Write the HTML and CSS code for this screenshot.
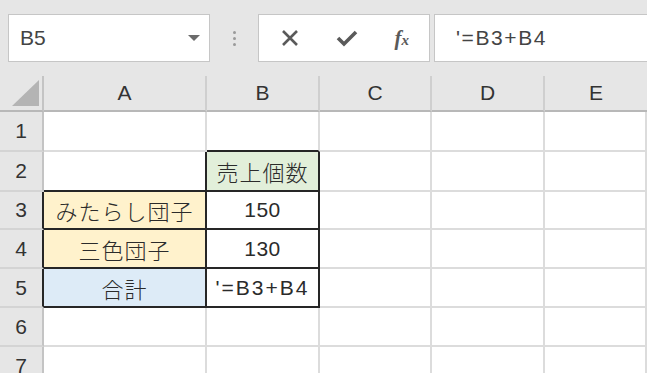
FILE: index.html
```html
<!DOCTYPE html>
<html lang="ja">

<head>
    <meta charset="UTF-8">
    <meta name="viewport" content="width=device-width, initial-scale=1.0">
    <title>Excel - 売上個数</title>
    <link rel="stylesheet" href="styles.css">
</head>

<body>
    <!-- Formula bar -->
    <div class="toolbar">
        <div class="name-box">
            <span>B5</span>
            <svg class="caret" width="12" height="7" viewBox="0 0 12 7"><path d="M0 0H12L6 6Z" fill="#6b6b6b"/></svg>
        </div>
        <div class="grip">
            <span></span><span></span><span></span>
        </div>
        <div class="fx-buttons">
            <svg width="18" height="18" viewBox="0 0 18 18"><path d="M2 2L16 16M16 2L2 16" stroke="#5a5a5a" stroke-width="2.6"/></svg>
            <svg width="22" height="18" viewBox="0 0 22 18"><path d="M2 9L8 15L20 3" stroke="#5a5a5a" stroke-width="3.6" fill="none"/></svg>
            <span class="fx">f<small>x</small></span>
        </div>
        <div class="formula">'=B3+B4</div>
    </div>

    <!-- Sheet -->
    <div class="sheet">
        <div class="corner">
            <svg width="27" height="26" viewBox="0 0 27 26"><path d="M27 0V26H0Z" fill="#b4b4b4"/></svg>
        </div>
        <div class="col-head">A</div>
        <div class="col-head">B</div>
        <div class="col-head">C</div>
        <div class="col-head">D</div>
        <div class="col-head last">E</div>

        <div class="row-head">1</div>
        <div class="cell"></div>
        <div class="cell bb"></div>
        <div class="cell"></div>
        <div class="cell"></div>
        <div class="cell"></div>

        <div class="row-head">2</div>
        <div class="cell br bb"></div>
        <div class="cell br bb green">売上個数</div>
        <div class="cell"></div>
        <div class="cell"></div>
        <div class="cell"></div>

        <div class="row-head dark">3</div>
        <div class="cell br bb orange">みたらし団子</div>
        <div class="cell br bb num">150</div>
        <div class="cell"></div>
        <div class="cell"></div>
        <div class="cell"></div>

        <div class="row-head dark">4</div>
        <div class="cell br bb orange">三色団子</div>
        <div class="cell br bb num">130</div>
        <div class="cell"></div>
        <div class="cell"></div>
        <div class="cell"></div>

        <div class="row-head dark">5</div>
        <div class="cell br bb blue">合計</div>
        <div class="cell br bb num wide">'=B3+B4</div>
        <div class="cell"></div>
        <div class="cell"></div>
        <div class="cell"></div>

        <div class="row-head">6</div>
        <div class="cell"></div>
        <div class="cell"></div>
        <div class="cell"></div>
        <div class="cell"></div>
        <div class="cell"></div>

        <div class="row-head">7</div>
        <div class="cell"></div>
        <div class="cell"></div>
        <div class="cell"></div>
        <div class="cell"></div>
        <div class="cell"></div>
    </div>
</body>

</html>
```

FILE: styles.css
```css
body {
    margin: 0;
    height: 373px;
    overflow: hidden;
    background-color: #e6e6e6;
    color: #333;
    font-family: 'Liberation Sans', 'Noto Sans CJK JP', sans-serif;
}

/* Formula bar */
.toolbar {
    display: flex;
    align-items: center;
    height: 76px;
    padding-left: 8px;
    box-sizing: border-box;
}

.name-box,
.fx-buttons,
.formula {
    height: 48px;
    box-sizing: border-box;
    background-color: #fff;
    border: 1px solid #c6c6c6;
    display: flex;
    align-items: center;
}

.name-box {
    width: 202px;
    padding: 0 9px 0 11px;
    justify-content: space-between;
    font-size: 21px;
    color: #444;
}

.grip {
    width: 48px;
    display: flex;
    flex-direction: column;
    align-items: center;
    gap: 3px;
}

.grip span {
    width: 3px;
    height: 3px;
    border-radius: 50%;
    background-color: #9a9a9a;
}

.fx-buttons {
    width: 172px;
    padding: 0 20px 0 22px;
    justify-content: space-between;
}

.fx {
    font-family: 'Liberation Serif', serif;
    font-style: italic;
    font-weight: bold;
    font-size: 21px;
    color: #5a5a5a;
}

.fx small {
    font-size: 15px;
}

.formula {
    flex: 1;
    margin-left: 4px;
    margin-right: -2px;
    padding-left: 21px;
    font-size: 21px;
    letter-spacing: 1.6px;
    color: #444;
}

/* Sheet grid */
.sheet {
    display: grid;
    grid-template-columns: 44px 163px 113px 112px 113px 1fr;
    grid-template-rows: 36px 40px 40px 38px 39px 39px 39px 39px;
    background-color: #fff;
}

.corner,
.col-head,
.row-head {
    background-color: #e6e6e6;
    display: flex;
    align-items: center;
    justify-content: center;
    box-sizing: border-box;
    font-size: 21px;
    color: #333;
}

.corner {
    border-right: 2px solid #c4c4c4;
    border-bottom: 2px solid #b8b8b8;
    justify-content: flex-start;
    padding-left: 12px;
}

.col-head {
    border-right: 2px solid #cfcfcf;
    border-bottom: 2px solid #b8b8b8;
}

.col-head.last {
    border-right: none;
}

.row-head {
    border-right: 2px solid #c4c4c4;
    border-bottom: 2px solid #d4d4d4;
}

.row-head.dark {
    border-right-color: #262626;
}

.cell {
    box-sizing: border-box;
    border-right: 2px solid #dcdcdc;
    border-bottom: 2px solid #dcdcdc;
    display: flex;
    align-items: center;
    justify-content: center;
    font-size: 22px;
    font-weight: 300;
    letter-spacing: 1px;
    color: #2b2b2b;
}

.cell.num {
    font-size: 21px;
    font-weight: normal;
    letter-spacing: 0.5px;
}

.cell.wide {
    letter-spacing: 2px;
}

.br {
    border-right-color: #262626;
}

.bb {
    border-bottom-color: #262626;
}

.green {
    background-color: #e2efda;
}

.orange {
    background-color: #fff2cc;
}

.blue {
    background-color: #ddebf7;
}
```
